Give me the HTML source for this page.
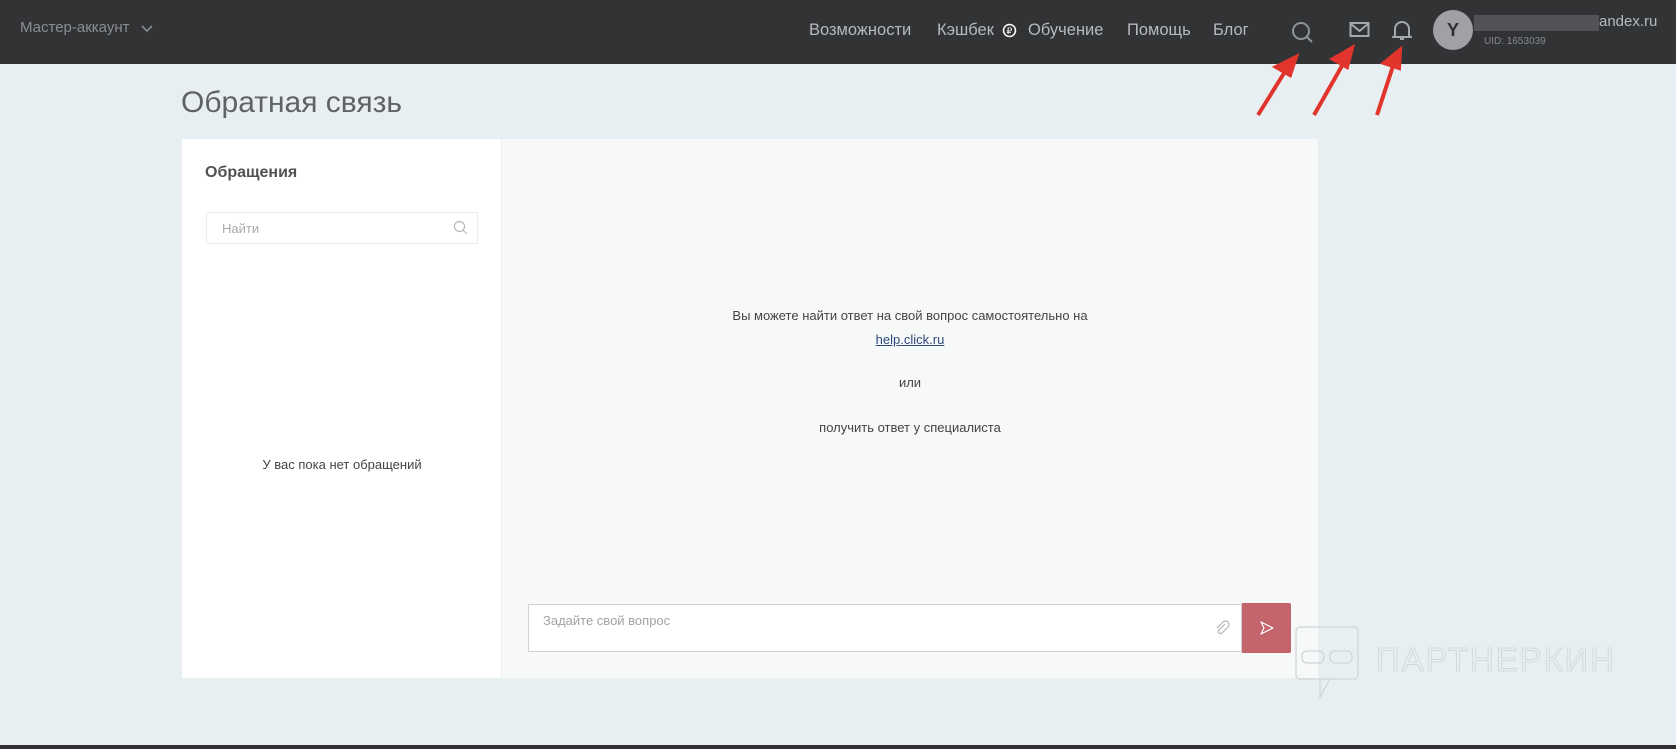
<!DOCTYPE html>
<html><head><meta charset="utf-8"><style>
*{margin:0;padding:0;box-sizing:border-box}
body{width:1676px;height:749px;background:#e8eff2;font-family:"Liberation Sans",sans-serif;position:relative;overflow:hidden}
.hdr{position:absolute;left:0;top:0;width:1676px;height:64px;background:#323335}
.t{position:absolute;white-space:nowrap}
.nav{color:#b7babd;font-size:16.5px;top:21px}
</style></head><body>
<div class="hdr"></div>
<div class="t" style="left:20px;top:19px;color:#8a8d91;font-size:15px">Мастер-аккаунт</div>
<svg class="t" style="left:141px;top:24px" width="12" height="10"><path d="M1 2l5 5 5-5" stroke="#8a8d91" stroke-width="1.6" fill="none"/></svg>
<div class="t nav" style="left:809px">Возможности</div>
<div class="t nav" style="left:937px">Кэшбек</div>
<svg class="t" style="left:1002px;top:23px" width="15" height="15"><circle cx="7.5" cy="7.5" r="6" stroke="#fff" stroke-width="1.5" fill="none"/><text x="4.5" y="11" font-size="9" fill="#fff" font-family="Liberation Sans">₽</text></svg>
<div class="t nav" style="left:1028px">Обучение</div>
<div class="t nav" style="left:1127px">Помощь</div>
<div class="t nav" style="left:1213px">Блог</div>
<svg class="t" style="left:1290px;top:20px" width="26" height="26"><circle cx="11" cy="11" r="8" stroke="#8f9296" stroke-width="2" fill="none"/><path d="M17 17l5 5" stroke="#8f9296" stroke-width="2"/></svg>
<svg class="t" style="left:1349px;top:21px" width="22" height="18"><rect x="1.5" y="2" width="18" height="13" stroke="#a5a8ab" stroke-width="2" fill="none"/><path d="M2 3l8.5 7 8.5-7" stroke="#a5a8ab" stroke-width="2" fill="none"/></svg>
<svg class="t" style="left:1390px;top:18px" width="24" height="24"><path d="M5 18V11a7 7 0 0 1 14 0v7l2 1H3z" stroke="#a5a8ab" stroke-width="2" fill="none" stroke-linejoin="round"/><path d="M10 21h4" stroke="#a5a8ab" stroke-width="2"/></svg>
<div class="t" style="left:1433px;top:10px;width:40px;height:40px;border-radius:50%;background:#9fa1a6;color:#2d2f33;font-weight:bold;font-size:18px;text-align:center;line-height:40px">Y</div>
<div class="t" style="left:1474px;top:15px;width:125px;height:16px;background:#525356"></div>
<div class="t" style="left:1599px;top:13px;color:#b7babd;font-size:15px">andex.ru</div>
<div class="t" style="left:1484px;top:36px;color:#85888c;font-size:10px">UID: 1653039</div>

<div class="t" style="left:181px;top:86px;color:#606264;font-size:30px">Обратная связь</div>
<div class="t" style="left:182px;top:139px;width:320px;height:539px;background:#fff;border-right:1px solid #eef0f1"></div>
<div class="t" style="left:502px;top:139px;width:816px;height:539px;background:#f7f8f8"></div>
<div class="t" style="left:205px;top:164px;color:#505254;font-size:16px;font-weight:bold">Обращения</div>
<div class="t" style="left:206px;top:212px;width:272px;height:32px;border:1px solid #eaecee;background:#fff"></div>
<div class="t" style="left:222px;top:221px;color:#a8abae;font-size:13px">Найти</div>
<svg class="t" style="left:453px;top:220px" width="16" height="16"><circle cx="6.5" cy="6.5" r="5" stroke="#b8bbbe" stroke-width="1.2" fill="none"/><path d="M10 10l4 4" stroke="#b8bbbe" stroke-width="1.2"/></svg>
<div class="t" style="left:182px;width:320px;top:457px;text-align:center;color:#444;font-size:13px">У вас пока нет обращений</div>
<div class="t" style="left:502px;width:816px;top:308px;text-align:center;color:#444;font-size:13px">Вы можете найти ответ на свой вопрос самостоятельно на</div>
<div class="t" style="left:502px;width:816px;top:332px;text-align:center;color:#2c4a7e;font-size:13px;text-decoration:underline">help.click.ru</div>
<div class="t" style="left:502px;width:816px;top:375px;text-align:center;color:#444;font-size:13px">или</div>
<div class="t" style="left:502px;width:816px;top:420px;text-align:center;color:#444;font-size:13px">получить ответ у специалиста</div>
<div class="t" style="left:528px;top:604px;width:714px;height:48px;background:#fff;border:1px solid #cfd2d4"></div>
<div class="t" style="left:543px;top:613px;color:#a0a3a6;font-size:13px">Задайте свой вопрос</div>
<svg class="t" style="left:1214px;top:620px" width="16" height="16"><path d="M11 4l-6 6a2 2 0 0 0 3 3l6-6a3.5 3.5 0 0 0-5-5L3 8" stroke="#b0b3b6" stroke-width="1.2" fill="none"/></svg>
<div class="t" style="left:1242px;top:603px;width:49px;height:50px;background:#c4646c;border-radius:0 2px 2px 0"></div>
<svg class="t" style="left:1259px;top:620px" width="16" height="16"><path d="M2 2l12 6-12 6 3-6z" stroke="#fff" stroke-width="1.2" fill="none" stroke-linejoin="round"/></svg>
<svg class="t" style="left:1290px;top:625px" width="340" height="85"><g stroke="#cfd4d7" stroke-width="1.2" fill="none"><rect x="6" y="2" width="62" height="52" rx="4"/><path d="M30 54v18l10-18"/><rect x="12" y="26" width="22" height="12" rx="5"/><rect x="40" y="26" width="22" height="12" rx="5"/></g><text x="86" y="46" font-family="Liberation Sans" font-size="33" fill="none" stroke="#cfd4d7" stroke-width="0.8" textLength="238" lengthAdjust="spacing">ПАРТНЕРКИН</text></svg>
<div class="t" style="left:0;top:745px;width:1676px;height:4px;background:#2e3033"></div>
<svg class="t" style="left:0;top:0" width="1676" height="130"><g stroke="#e0342c" stroke-width="4" fill="#e0342c"><path d="M1258 115L1286 70"/><path d="M1296 57l-20 10 14 8z"/><path d="M1314 115L1343 64"/><path d="M1352 48l-19 11 14 8z"/><path d="M1377 115L1393 66"/><path d="M1400 50l-16 13 15 5z"/></g></svg>
</body></html>
